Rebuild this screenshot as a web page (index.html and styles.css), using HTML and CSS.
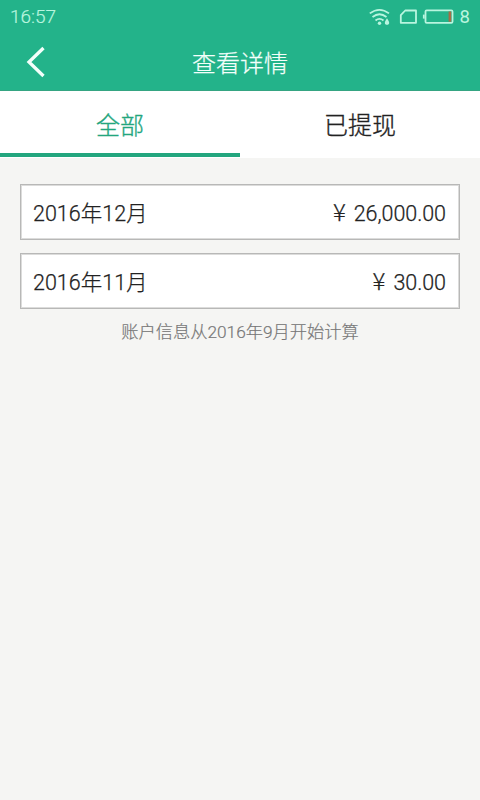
FILE: index.html
```html
<!DOCTYPE html>
<html lang="zh-CN">
<head>
<meta charset="utf-8">
<title>查看详情</title>
<link rel="stylesheet" href="styles.css">
</head>
<body>
<header class="top">
  <div class="status">
    <span class="clock">16:57</span>
    <svg class="status-icons" width="88" height="20" viewBox="0 0 88 20" fill="none" stroke="currentColor" stroke-width="1.8">
      <path d="M1.800 6.400Q11.500 -.8 21 6.400M4.500 10Q11.500 4.400 18.500 10M7.500 13.500Q11.500 10.200 15.500 13.500"/>
      <circle cx="11.500" cy="16.300" r="1.700" fill="currentColor" stroke="none"/>
      <path d="M19 11.200q3 4.400 1.900 5.700q-1.900 1.800-3.800 0q-1.100-1.300 1.900-5.700z" fill="currentColor" stroke="none"/>
      <path d="M32.800 15.800V8.200L37.200 3.500H48V15.800Z" stroke-linejoin="round"/>
      <rect x="57.500" y="3.300" width="27" height="12.600" rx="1.200"/>
      <path d="M55.800 7.600v4"/>
      <path class="charge" d="M81.900 4.500v10.200" stroke-width="2.600"/>
    </svg>
    <span class="level">8</span>
  </div>
  <div class="title-bar">
    <svg class="back" width="20" height="32" viewBox="0 0 20 32" fill="none" stroke="currentColor" stroke-width="3.300"><path d="M17.500 2L3 16l14.500 14"/></svg>
    <h1>查看详情</h1>
  </div>
</header>
<nav class="tabs">
  <a class="tab active">全部</a>
  <a class="tab">已提现</a>
</nav>
<main class="list">
  <div class="row"><span>2016年12月</span><span class="amount"><span class="yen">¥</span>26,000.00</span></div>
  <div class="row"><span>2016年11月</span><span class="amount"><span class="yen">¥</span>30.00</span></div>
  <p class="note">账户信息从2016年9月开始计算</p>
</main>
</body>
</html>
```
FILE: styles.css
```css
* { box-sizing: border-box; }
body {
  margin: 0;
  min-height: 800px;
  background: #f5f5f3;
  color: #222;
  font-family: Roboto, "Noto Sans CJK SC", sans-serif;
  font-weight: 300;
}
.top { height: 91px; background: #23b38a; color: #f4fffb; border-bottom: 1px solid #35a582; }
.status { height: 33px; display: flex; align-items: center; padding: 0 10px; color: #b9f5df; font-size: 18.500px; font-weight: 400; }
.clock { flex: 1; font-weight: 300; font-size: 19px; -webkit-text-stroke: .2px; }
.status-icons { margin-right: 4px; }
.charge { stroke: #a66b46; }
.title-bar { height: 58px; display: grid; grid-template-columns: 60px 1fr 60px; align-items: center; }
.back { margin-left: 26px; }
h1 { margin: 0; padding-top: 3px; text-align: center; font-size: 24px; line-height: 36px; font-weight: 300; -webkit-text-stroke: .25px; }
.tabs { height: 67px; padding-bottom: 1px; display: flex; background: #fff; }
.tab { flex: 1; padding-top: 8px; text-align: center; font-size: 24px; line-height: 54px; border-bottom: 4px solid transparent; font-weight: 300; -webkit-text-stroke: .35px; }
.active { color: #23a67e; border-color: #23a67e; }
.list { padding: 26px 20px; }
.row {
  height: 56px;
  margin-bottom: 13px;
  padding: 3px 13px 0 12px;
  display: flex;
  justify-content: space-between;
  align-items: center;
  background: #fff;
  border: 1px solid #b8b8b7;
  box-shadow: inset 0 0 0 1px #dcdcdb;
  font-size: 21.500px;
  line-height: 30px;
  -webkit-text-stroke: .25px;
}
.amount { letter-spacing: -.05px; }
.yen { margin-right: 8px; font-family: "Noto Sans CJK SC", sans-serif; font-size: 24px; line-height: 1; }
.note { margin: -3px 0 0; text-align: center; font-size: 17.250px; line-height: 26px; color: #777; -webkit-text-stroke: .2px; }
```
